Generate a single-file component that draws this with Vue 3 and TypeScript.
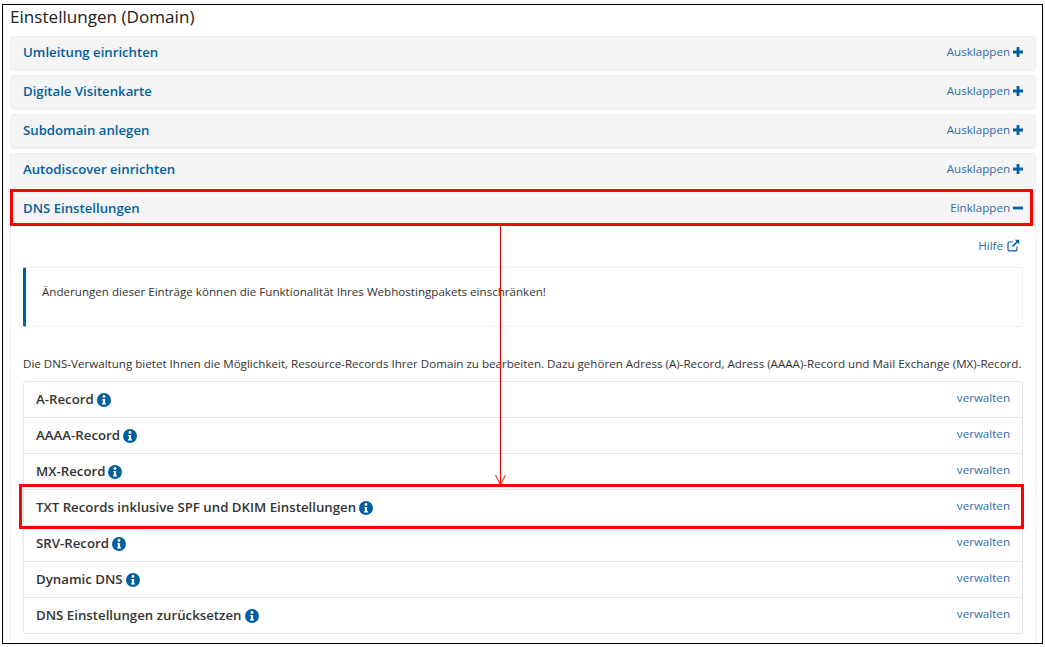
<script setup lang="ts">
const collapsed: string[] = ['Umleitung einrichten', 'Digitale Visitenkarte', 'Subdomain anlegen', 'Autodiscover einrichten']
const records: string[] = ['A-Record', 'AAAA-Record', 'MX-Record', 'TXT Records inklusive SPF und DKIM Einstellungen', 'SRV-Record', 'Dynamic DNS', 'DNS Einstellungen zurücksetzen']
</script>

<template>
  <div class="page">
    <div class="frame">
      <h1 class="title">Einstellungen (Domain)</h1>
      <section v-for="name in collapsed" :key="name" class="panel">
        <header class="head">
          <span class="head-title">{{ name }}</span>
          <span class="toggle">Ausklappen
            <svg class="sign" viewBox="0 0 10 10"><path d="M3.6 0h2.8v3.6H10v2.8H6.4V10H3.6V6.400H0V3.600h3.600z" /></svg>
          </span>
        </header>
      </section>
      <section class="panel open">
        <header class="head">
          <span class="head-title">DNS Einstellungen</span>
          <span class="toggle">Einklappen
            <svg class="sign" viewBox="0 0 10 10"><path d="M0 3.6h10v2.8H0z" /></svg>
          </span>
        </header>
        <div class="body">
          <div class="help">
            <a>Hilfe</a>
            <svg class="ext" viewBox="0 0 13 13" fill="none" stroke="#005f9e">
              <path d="M10 7.500v3a1.400 1.400 0 0 1-1.400 1.400H2.400A1.400 1.400 0 0 1 1 10.500V4.400A1.400 1.400 0 0 1 2.400 3H6" stroke-width="1.200" />
              <path d="M5.500 7.500 11 2" stroke-width="1.700" />
              <path d="M7.800 .7h4.500v4.500z" fill="#005f9e" stroke="none" />
            </svg>
          </div>
          <div class="notice">Änderungen dieser Einträge können die Funktionalität Ihres Webhostingpakets einschränken!</div>
          <p class="intro">Die DNS-Verwaltung bietet Ihnen die Möglichkeit, Resource-Records Ihrer Domain zu bearbeiten. Dazu gehören Adress (A)-Record, Adress (AAAA)-Record und Mail Exchange (MX)-Record.</p>
          <ul class="list">
            <li v-for="r in records" :key="r" class="row">
              <span class="name">{{ r }}
                <svg class="info" viewBox="0 0 14 14">
                  <circle cx="7" cy="7" r="7" fill="#005f9e" />
                  <circle cx="7" cy="3.500" r="1.400" fill="#fff" />
                  <path d="M5.300 5.900h2.800v4.300h.9v1.300H5v-1.300h.9V7.200h-.6z" fill="#fff" />
                </svg>
              </span>
              <a class="manage">verwalten</a>
            </li>
          </ul>
        </div>
      </section>
      <div class="mark mark-top"></div>
      <div class="mark mark-bottom"></div>
      <svg class="arrow" width="14" height="262" viewBox="0 0 14 262" fill="none" stroke="#f00">
        <path d="M7.500 0v260M2.500 250l5 10 5-10" stroke-width="1" />
      </svg>
    </div>
  </div>
</template>

<style scoped>
.page {
  width: 1045px;
  height: 647px;
  overflow: hidden;
  background: #fff;
  font-family: "Open Sans", sans-serif;
  color: #333;
  padding: 4px 2px 3px;
  box-sizing: border-box;
}
.frame {
  position: relative;
  height: 640px;
  box-sizing: border-box;
  border: 1px solid #000;
  padding: 0 6px 0 7px;
  overflow: hidden;
}
.title {
  margin: 0;
  height: 31px;
  font-size: 17.100px;
  line-height: 24px;
  font-weight: 400;
  color: #222;
}
.panel {
  margin-bottom: 5px;
  border: 1px solid #eee;
  border-radius: 3px;
  box-shadow: 0 1px 1px rgba(0, 0, 0, 0.05);
}
.head {
  height: 32px;
  background: #f5f5f5;
  display: flex;
  align-items: center;
  justify-content: space-between;
  padding: 0 12px;
  box-sizing: content-box;
}
.head-title {
  font-size: 13.200px;
  font-weight: 600;
  color: #005f9e;
  position: relative;
  top: -1px;
}
.toggle {
  display: flex;
  align-items: center;
  gap: 3px;
  font-size: 11.600px;
  line-height: 16px;
  color: #2f6ca8;
  position: relative;
  top: -1px;
}
.sign {
  width: 10px;
  height: 10px;
  fill: #005f9e;
}
.body {
  padding: 0 12px;
  height: 460px;
}
.help {
  height: 42px;
  padding-bottom: 2px;
  box-sizing: border-box;
  display: flex;
  justify-content: flex-end;
  align-items: center;
  gap: 4px;
  padding-right: 3px;
  font-size: 11.600px;
  color: #2f6ca8;
}
.ext {
  width: 13px;
  height: 13px;
}
.notice {
  height: 60px;
  box-sizing: border-box;
  border: 1px solid #eee;
  border-left: 3px solid #005f9e;
  border-radius: 2px;
  padding: 15px 16px;
  font-size: 11.600px;
  line-height: 18px;
  color: #333;
}
.intro {
  margin: 0;
  height: 54px;
  padding-top: 28px;
  box-sizing: border-box;
  font-size: 11.600px;
  line-height: 18px;
  white-space: nowrap;
  color: #333;
}
.list {
  list-style: none;
  margin: 0;
  padding: 0;
  border: 1px solid #e6e6e6;
  border-radius: 3px;
}
.row {
  height: 35px;
  display: flex;
  justify-content: space-between;
  padding: 0 12px;
  border-bottom: 1px solid #e6e6e6;
  position: relative;
}
.row:last-child {
  border-bottom: 0;
}
.name {
  display: flex;
  align-items: center;
  gap: 3px;
  font-size: 13.250px;
  font-weight: 600;
  color: #333;
  height: 33px;
}
.info {
  width: 14px;
  height: 14px;
  position: relative;
  top: 1px;
}
.manage {
  font-size: 11.600px;
  line-height: 32px;
  color: #2f6ca8;
}
.mark {
  position: absolute;
  border: 3px solid #f00;
  box-sizing: border-box;
}
.mark-top {
  left: 7px;
  top: 184px;
  width: 1023px;
  height: 37px;
}
.mark-bottom {
  left: 16px;
  top: 479px;
  width: 1005px;
  height: 45px;
}
.arrow {
  position: absolute;
  left: 490px;
  top: 220px;
}
</style>
